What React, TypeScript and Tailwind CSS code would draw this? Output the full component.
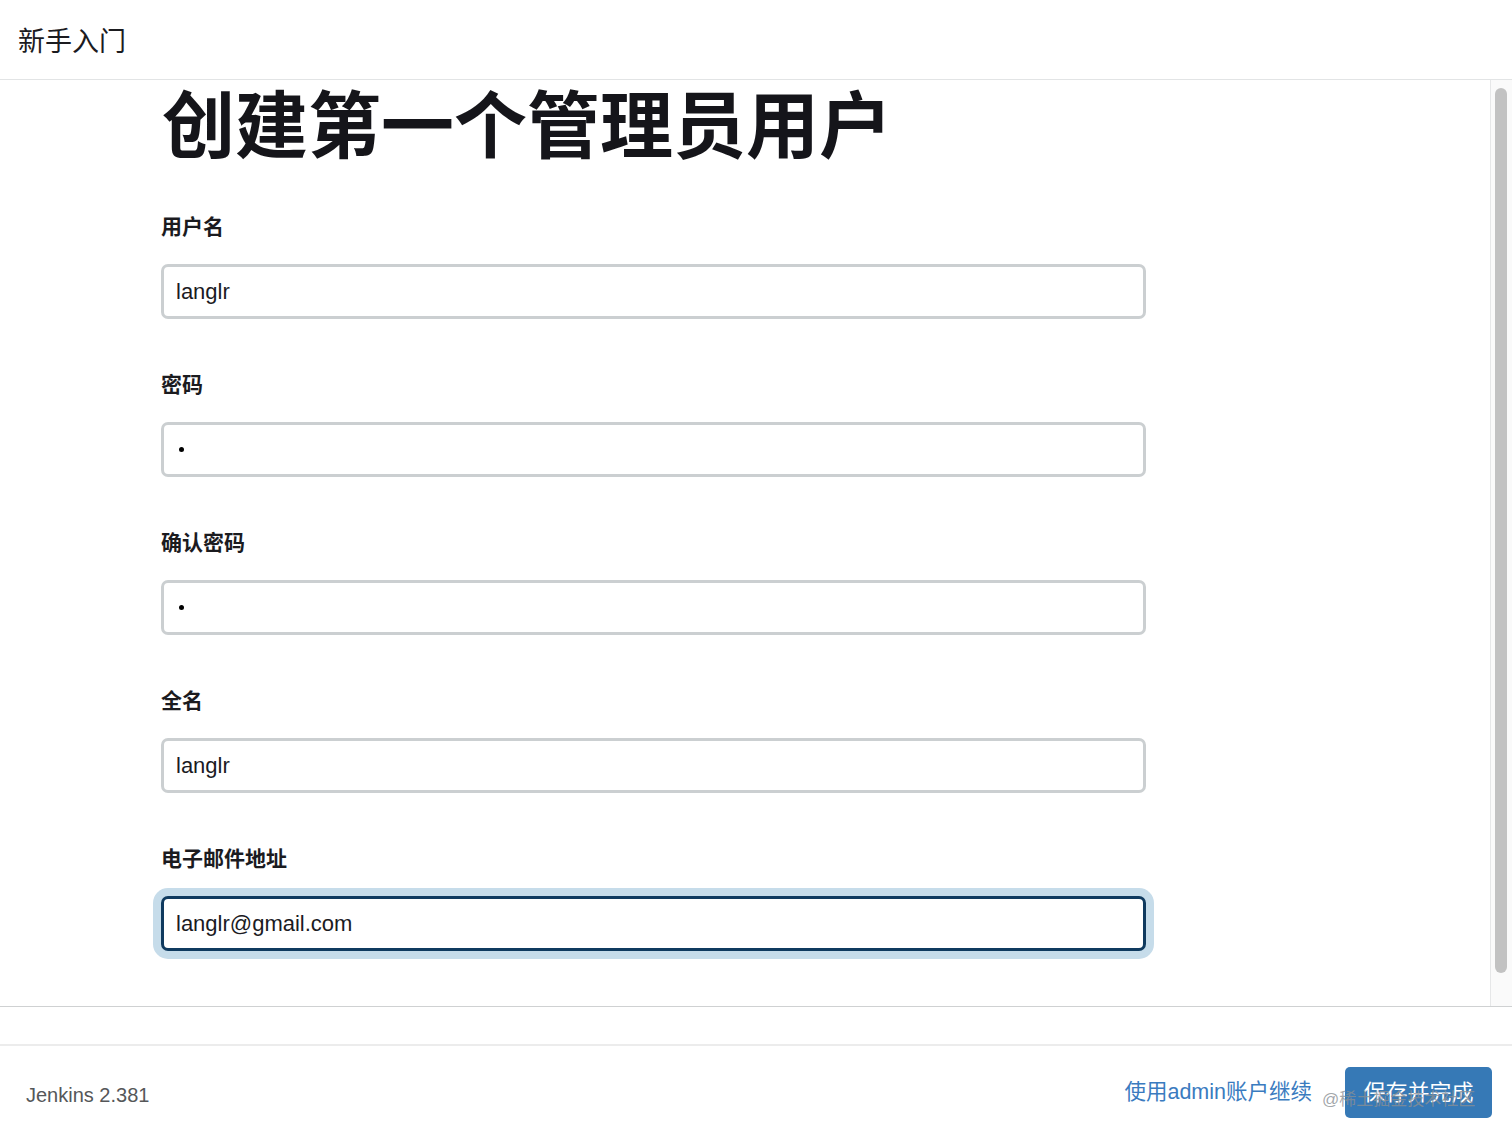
import React from "react";

const FONT = { fontFamily: '"Liberation Sans", "Noto Sans CJK SC", sans-serif' };

function Label({ children }: { children: React.ReactNode }) {
  return <div className="h-[30px] leading-[30px] text-[21px] font-semibold text-[#1b1b1f]">{children}</div>;
}

function Field({ label, value, focused }: { label: string; value: string; focused?: boolean }) {
  return (
    <div className="flex flex-col">
      <Label>{label}</Label>
      <div
        className={
          focused
            ? "mt-[22px] w-[985px] h-[55px] rounded-[7px] border-[3px] border-[#0f3a5f] bg-white shadow-[0_0_0_8px_#c6dcea] flex items-center pl-[12px]"
            : "mt-[22px] w-[985px] h-[55px] rounded-[7px] border-[3px] border-[#cbcfd1] bg-white flex items-center pl-[12px]"
        }
      >
        <span className="text-[22px] text-[#1b1b1f]">{value}</span>
      </div>
    </div>
  );
}

function PasswordField({ label }: { label: string }) {
  return (
    <div className="flex flex-col">
      <Label>{label}</Label>
      <div className="mt-[22px] w-[985px] h-[55px] rounded-[7px] border-[3px] border-[#cbcfd1] bg-white flex items-center pl-[12px]">
        <span className="block w-[5px] h-[5px] rounded-full bg-black ml-[3px]" />
      </div>
    </div>
  );
}

export default function App() {
  return (
    <div className="w-[1512px] h-[1138px] bg-white flex flex-col overflow-hidden" style={FONT}>
      <header className="h-[80px] shrink-0 border-b border-[#e2e4e5] flex items-center pl-[18px] pt-[5px]">
        <span className="text-[27px] text-[#1b1b1f]">新手入门</span>
      </header>

      <div className="h-[927px] shrink-0 flex border-b border-[#cfd1d2]">
        <main className="flex-1 pl-[161px] pt-[10px]">
          <h1 className="text-[73px] leading-none font-bold text-[#15151a] mb-[49px] pl-[1px]">创建第一个管理员用户</h1>
          <div className="flex flex-col gap-[51px]">
            <Field label="用户名" value="langlr" />
            <PasswordField label="密码" />
            <PasswordField label="确认密码" />
            <Field label="全名" value="langlr" />
            <Field label="电子邮件地址" value="langlr@gmail.com" focused />
          </div>
        </main>
        <div className="w-[22px] shrink-0 border-l border-[#e6e7e8] bg-[#fafafa] pt-[8px] pl-[4px]">
          <div className="w-[12px] h-[885px] rounded-full bg-[#c2c2c2]" />
        </div>
      </div>

      <div className="h-[39px] shrink-0 border-b-2 border-[#ececec]" />

      <footer className="flex-1 flex items-center justify-between pl-[26px] pr-[20px] relative">
        <span className="text-[20px] text-[#555759] mt-[6px]">Jenkins 2.381</span>
        <div className="flex items-center">
          <a className="text-[21.5px] text-[#3a7bbf] mr-[33px]">使用admin账户继续</a>
          <button className="w-[147px] h-[51px] rounded-[5px] bg-[#3679b6] text-white text-[22px]">保存并完成</button>
        </div>
        <span className="absolute left-[1322px] top-[41px] text-[17px] text-[#8a8f94]/80 pointer-events-none">@稀土掘金技术社区</span>
      </footer>
    </div>
  );
}
